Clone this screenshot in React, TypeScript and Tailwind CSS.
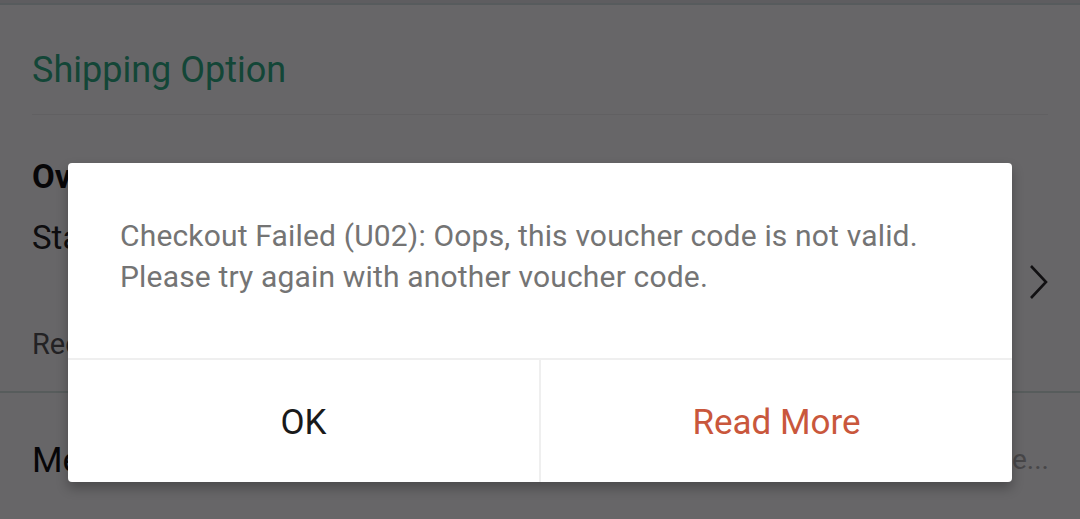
export default function App() {
  return (
    <div
      className="relative w-[1080px] h-[519px] overflow-hidden bg-white"
      style={{ fontFamily: "Roboto, 'Noto Sans', sans-serif" }}
    >
      {/* page underneath */}
      <div className="flex flex-col">
        <div className="h-[5px] bg-[#e9e9ea] border-b-2 border-[#d8e4e3]" />
        <div className="px-8">
          <div className="h-[110px] flex items-center border-b border-[#f0f0f0]">
            <span className="text-[36px] text-[#2fae86] leading-none pt-[20px]">Shipping Option</span>
          </div>
          <div className="flex items-center h-[276px]">
            <div className="flex-1 flex flex-col pt-[12px]">
              <span className="text-[33px] font-bold text-[#111] leading-none">Overseas Standard</span>
              <span className="text-[33px] text-[#222] leading-none mt-[28px]">Standard Delivery</span>
              <span className="text-[29px] text-[#555] leading-none mt-[76px]">Receive by</span>
            </div>
            <svg width="20" height="36" viewBox="0 0 20 36" className="mt-[58px] -mr-[1px]">
              <polyline points="2,2 17,18 2,34" fill="none" stroke="#2a2a2a" strokeWidth="2.6" />
            </svg>
          </div>
        </div>
        <div className="h-[2px] bg-[#d6e6e2]" />
        <div className="px-8 flex items-center justify-between h-[130px] pt-[4px]">
          <span className="text-[35px] text-[#111] leading-none">Message:</span>
          <span className="text-[28px] text-[#b0b0b0] leading-none -mr-[1px]">Please leave...</span>
        </div>
      </div>

      {/* overlay */}
      <div className="absolute inset-0 bg-[#020004]/60 flex items-start justify-center pt-[163px]">
        <div className="w-[944px] bg-white rounded-[4px] shadow-[0_6px_12px_rgba(0,0,0,0.28)] flex flex-col">
          <div className="h-[197px] pl-[52px] pr-6 pt-[52px] border-b-2 border-[#efefef]">
            <p className="text-[30px] tracking-[0.17px] leading-[41px] text-[#747474]">
              Checkout Failed (U02): Oops, this voucher code is not valid.
              <br />
              Please try again with another voucher code.
            </p>
          </div>
          <div className="flex h-[122px]">
            <button className="flex-1 flex items-center justify-center border-r-2 border-[#efefef] text-[35px] text-[#1a1a1a] pt-[4px]">
              OK
            </button>
            <button className="flex-1 flex items-center justify-center text-[35px] text-[#c9573c] pt-[4px]">
              Read More
            </button>
          </div>
        </div>
      </div>
    </div>
  );
}
